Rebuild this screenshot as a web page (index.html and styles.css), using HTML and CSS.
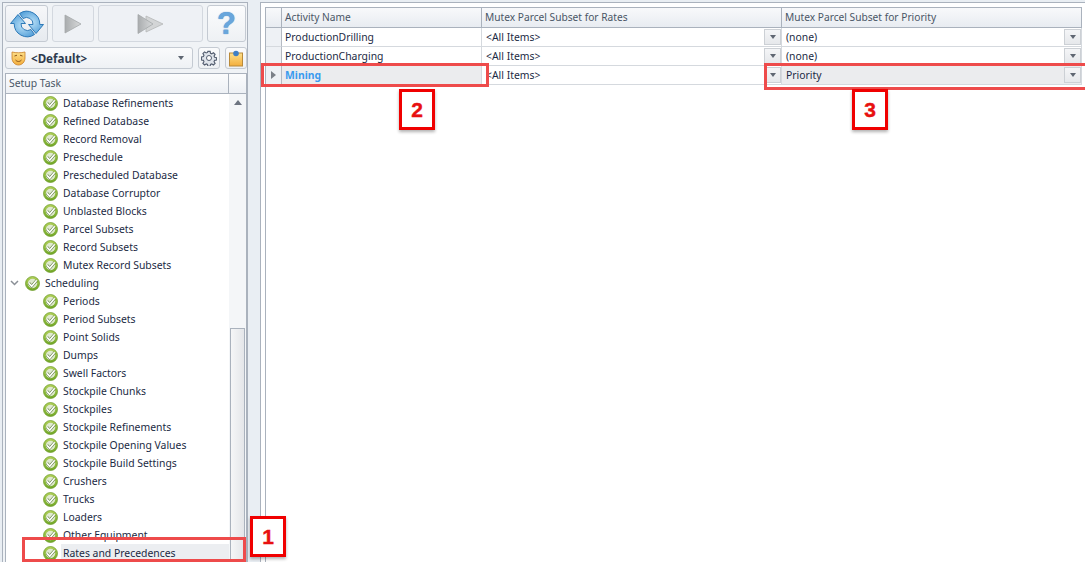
FILE: index.html
```html
<!DOCTYPE html>
<html lang="en">
<head>
<meta charset="utf-8">
<title>Setup Task</title>
<link rel="stylesheet" href="styles.css">
</head>
<body>
<svg class="defs" width="0" height="0" aria-hidden="true">
  <defs>
    <linearGradient id="gb" x1="0" y1="0" x2="0" y2="1">
      <stop offset="0" stop-color="#b4d25c"/>
      <stop offset="1" stop-color="#6fa626"/>
    </linearGradient>
    <radialGradient id="bl" cx="50%" cy="50%" r="65%">
      <stop offset="0" stop-color="#b9e0f7"/>
      <stop offset="1" stop-color="#4b9ad6"/>
    </radialGradient>
    <linearGradient id="gr" x1="0" y1="0" x2="1" y2="0">
      <stop offset="0" stop-color="#a9acae"/>
      <stop offset="1" stop-color="#d8dadb"/>
    </linearGradient>
    <linearGradient id="or" x1="0" y1="0" x2="0" y2="1">
      <stop offset="0" stop-color="#fde08a"/>
      <stop offset="1" stop-color="#f3ae3d"/>
    </linearGradient>
    <symbol id="ok" viewBox="0 0 15 15">
      <circle cx="7.5" cy="7.5" r="7" fill="url(#gb)" stroke="#6a9a24" stroke-width="0.7"/>
      <circle cx="7.5" cy="7.5" r="4.7" fill="#dfe9cf"/>
      <path d="M4 7.300l2.700 2.900L11.700 4.300" fill="none" stroke="#5f7f3c" stroke-width="2.800"/>
      <path d="M4 7.300l2.700 2.900L11.700 4.300" fill="none" stroke="#fff" stroke-width="1.700"/>
    </symbol>
  </defs>
</svg>

<div class="app">
  <aside class="left">
    <div class="toolbar">
      <button class="tool tool-refresh" type="button">
        <svg width="34" height="32" viewBox="0 0 34 32">
          <path id="arc" d="M8 6.500L15.500 15.500H11A6.500 6.500 0 0 0 21 21.500L24.500 26.500A13 13 0 0 1 4.200 15.500H.5Z" fill="url(#bl)" stroke="#2f7ab8" stroke-width="1"/>
          <path d="M8 6.500L15.500 15.500H11A6.500 6.500 0 0 0 21 21.500L24.500 26.500A13 13 0 0 1 4.200 15.500H.5Z" transform="rotate(180 17 16)" fill="url(#bl)" stroke="#2f7ab8" stroke-width="1"/>
        </svg>
      </button>
      <button class="tool tool-play" type="button">
        <svg width="18" height="20" viewBox="0 0 18 20"><path d="M1 1l16 9-16 9z" fill="url(#gr)" stroke="#a5a8aa" stroke-width=".8"/></svg>
      </button>
      <button class="tool tool-ff" type="button">
        <svg width="27" height="22" viewBox="0 0 27 22"><path d="M9 3l17 8-17 8z" fill="#d3d5d6" stroke="#b5b7b8" stroke-width=".8"/><path d="M1 1.500l15 9.500-15 9.500z" fill="url(#gr)" stroke="#a5a8aa" stroke-width=".8"/></svg>
      </button>
      <button class="tool tool-help" type="button"><span class="q">?</span></button>
    </div>

    <div class="selector">
      <div class="combo">
        <svg class="mask" width="15" height="16" viewBox="0 0 15 16">
          <path d="M1 2c4 1 9 1 13 0v6c0 4-3 7-6.500 7S1 12 1 8z" fill="url(#or)" stroke="#c9822a" stroke-width=".8"/>
          <path d="M3.500 6l2.500-.8M9 5.200l2.500.8M4.500 10c2 2 4 2 6 0" fill="none" stroke="#8a5417" stroke-width="1"/>
        </svg>
        <span class="combo-text">&lt;Default&gt;</span>
        <span class="caret caret-combo"></span>
      </div>
      <button class="mini" type="button">
        <svg width="16" height="16" viewBox="0 0 16 16"><path d="M6.800 1h2.400l.4 2 1.300.6 1.800-1.100 1.700 1.700-1.100 1.800.6 1.300 2 .4v2.400l-2 .4-.6 1.300 1.100 1.800-1.700 1.700-1.800-1.100-1.300.6-.4 2H6.800l-.4-2-1.300-.6-1.800 1.100-1.700-1.700 1.100-1.800-.6-1.300-2-.4V6.800l2-.4.6-1.300-1.100-1.800 1.700-1.700 1.800 1.100 1.300-.6z" transform="translate(.4 .4) scale(.95)" fill="#dfe4eb" stroke="#566072" stroke-width="1.200"/><circle cx="8" cy="8" r="2.500" fill="#fff" stroke="#566072"/></svg>
      </button>
      <button class="mini" type="button">
        <svg width="16" height="17" viewBox="0 0 16 17"><rect x="1.500" y="3" width="13" height="13" fill="url(#or)" stroke="#b98a3a"/><circle cx="8" cy="3.500" r="2.800" fill="#3f7fc4"/></svg>
      </button>
    </div>

    <section class="tree">
      <header class="tree-head"><span class="tree-title">Setup Task</span><span class="tree-corner"></span></header>
      <div class="tree-body">
        <ul class="rows">
          <li class="row"><svg class="ok"><use href="#ok"/></svg>Database Refinements</li>
          <li class="row"><svg class="ok"><use href="#ok"/></svg>Refined Database</li>
          <li class="row"><svg class="ok"><use href="#ok"/></svg>Record Removal</li>
          <li class="row"><svg class="ok"><use href="#ok"/></svg>Preschedule</li>
          <li class="row"><svg class="ok"><use href="#ok"/></svg>Prescheduled Database</li>
          <li class="row"><svg class="ok"><use href="#ok"/></svg>Database Corruptor</li>
          <li class="row"><svg class="ok"><use href="#ok"/></svg>Unblasted Blocks</li>
          <li class="row"><svg class="ok"><use href="#ok"/></svg>Parcel Subsets</li>
          <li class="row"><svg class="ok"><use href="#ok"/></svg>Record Subsets</li>
          <li class="row"><svg class="ok"><use href="#ok"/></svg>Mutex Record Subsets</li>
          <li class="row row-group"><svg class="chev" width="9" height="6" viewBox="0 0 9 6"><path d="M1 1l3.500 3.500L8 1" fill="none" stroke="#8a8f96" stroke-width="1.500"/></svg><svg class="ok"><use href="#ok"/></svg>Scheduling</li>
          <li class="row"><svg class="ok"><use href="#ok"/></svg>Periods</li>
          <li class="row"><svg class="ok"><use href="#ok"/></svg>Period Subsets</li>
          <li class="row"><svg class="ok"><use href="#ok"/></svg>Point Solids</li>
          <li class="row"><svg class="ok"><use href="#ok"/></svg>Dumps</li>
          <li class="row"><svg class="ok"><use href="#ok"/></svg>Swell Factors</li>
          <li class="row"><svg class="ok"><use href="#ok"/></svg>Stockpile Chunks</li>
          <li class="row"><svg class="ok"><use href="#ok"/></svg>Stockpiles</li>
          <li class="row"><svg class="ok"><use href="#ok"/></svg>Stockpile Refinements</li>
          <li class="row"><svg class="ok"><use href="#ok"/></svg>Stockpile Opening Values</li>
          <li class="row"><svg class="ok"><use href="#ok"/></svg>Stockpile Build Settings</li>
          <li class="row"><svg class="ok"><use href="#ok"/></svg>Crushers</li>
          <li class="row"><svg class="ok"><use href="#ok"/></svg>Trucks</li>
          <li class="row"><svg class="ok"><use href="#ok"/></svg>Loaders</li>
          <li class="row"><svg class="ok"><use href="#ok"/></svg>Other Equipment</li>
          <li class="row row-selected"><svg class="ok"><use href="#ok"/></svg><span class="row-label">Rates and Precedences</span></li>
        </ul>
        <div class="scrollbar">
          <span class="scroll-up"></span>
          <span class="scroll-thumb"></span>
        </div>
      </div>
    </section>
  </aside>

  <div class="splitter"></div>

  <main class="right">
    <div class="grid">
      <div class="gh gh-ind"></div>
      <div class="gh">Activity Name</div>
      <div class="gh">Mutex Parcel Subset for Rates</div>
      <div class="gh gh-last">Mutex Parcel Subset for Priority</div>

      <div class="gi"></div>
      <div class="gc">ProductionDrilling</div>
      <div class="gc gc-drop">&lt;All Items&gt;<span class="drop"></span></div>
      <div class="gc gc-drop gc-last">(none)<span class="drop"></span></div>

      <div class="gi"></div>
      <div class="gc">ProductionCharging</div>
      <div class="gc gc-drop">&lt;All Items&gt;<span class="drop"></span></div>
      <div class="gc gc-drop gc-last">(none)<span class="drop"></span></div>

      <div class="gi gi-cur"><span class="cur-arrow"></span></div>
      <div class="gc gc-active">Mining</div>
      <div class="gc gc-drop">&lt;All Items&gt;<span class="drop"></span></div>
      <div class="gc gc-drop gc-last gc-grey">Priority<span class="drop"></span></div>
    </div>
  </main>
</div>

<div class="mark mark-1"></div>
<div class="mark mark-2"></div>
<div class="mark mark-3"></div>
<div class="num num-1">1</div>
<div class="num num-2">2</div>
<div class="num num-3">3</div>
</body>
</html>
```

FILE: styles.css
```css
* { box-sizing: border-box; }
html, body { margin: 0; height: 100%; overflow: hidden; }
body {
  background: #e9eef3;
  font-family: "Noto Sans", "DejaVu Sans", sans-serif;
  font-size: 10.4px;
  color: #1b2a44;
  position: relative;
}
.defs { position: absolute; }
.app { display: flex; height: 562px; padding: 2px 0 0 2px; }

.left {
  width: 246px;
  flex: none;
  display: flex;
  flex-direction: column;
  border: 1px solid #aab2bd;
  border-bottom: 0;
  background: #f0f3f6;
  padding: 2px 0 0 2px;
}
.toolbar { display: flex; gap: 4px; height: 37px; flex: none; }
.tool {
  padding: 0;
  display: flex;
  align-items: center;
  justify-content: center;
  border: 1px solid #d3d8df;
  border-radius: 3px;
  background: #eef1f5;
}
.tool-refresh { width: 43px; background: linear-gradient(#f6f7f9, #e6eaef); border-color: #c4cad2; }
.tool-play { width: 42px; }
.tool-ff { width: 105px; }
.tool-help { width: 39px; background: linear-gradient(#fbfcfd, #eef1f4); border-color: #c4cad2; }
.q {
  font: bold 31px/1 "Liberation Sans", sans-serif;
  color: #69a6dc;
  text-shadow: 0 0 1px #3f7fc0;
}
.selector { display: flex; gap: 5px; margin-top: 5px; height: 22px; flex: none; }
.combo {
  width: 189px;
  display: flex;
  align-items: center;
  padding: 0 6px 0 5px;
  background: linear-gradient(#fafbfc, #eef1f4);
  border: 1px solid #c4cad2;
  border-radius: 3px;
}
.mask { margin-right: 5px; }
.combo-text { font-weight: 700; font-size: 11.6px; flex: 1; color: #2d3a4e; }
.caret { width: 0; height: 0; border: 3.500px solid transparent; border-top: 4px solid #5f6672; border-bottom: 0; }
.caret-combo { margin-right: 2px; }
.mini {
  width: 22px;
  padding: 0;
  display: flex;
  align-items: center;
  justify-content: center;
  background: linear-gradient(#fafbfc, #eef1f4);
  border: 1px solid #c4cad2;
  border-radius: 3px;
}

.tree {
  width: 242px;
  margin-top: 4px;
  flex: 1;
  min-height: 0;
  display: flex;
  flex-direction: column;
  border: 1px solid #aab2bd;
  border-bottom: 0;
  background: #fff;
}
.tree-head {
  display: flex;
  height: 20px;
  flex: none;
  background: linear-gradient(#fbfcfd, #edf0f4);
  border-bottom: 1px solid #aab2bd;
  color: #4a5666;
  line-height: 19px;
}
.tree-title { flex: 1; padding-left: 3px; border-right: 1px solid #aab2bd; }
.tree-corner { width: 17px; flex: none; }
.tree-body { flex: 1; min-height: 0; display: flex; overflow: hidden; }
.rows { list-style: none; margin: 0; padding: 0; flex: 1; min-width: 0; }
.row { height: 18px; display: flex; align-items: center; padding-left: 37px; white-space: nowrap; }
.row-group { padding-left: 4px; }
.ok { width: 15px; height: 15px; margin-right: 5px; flex: none; }
.chev { margin-right: 6px; flex: none; }
.row-label { background: #eceef1; flex: 1; height: 18px; line-height: 18px; margin-left: -2px; padding-left: 2px; }

.scrollbar {
  width: 17px;
  flex: none;
  display: flex;
  flex-direction: column;
  align-items: center;
  background: #f4f6f8;
  padding-top: 6px;
}
.scroll-up { width: 0; height: 0; border: 4.500px solid transparent; border-bottom: 5px solid #6d7480; border-top: 0; }
.scroll-thumb { width: 15px; margin-top: 223px; flex: 1; background: linear-gradient(90deg, #f5f6f7, #e4e6e9); border: 1px solid #aab2bd; border-bottom: 0; }

.splitter { width: 12px; flex: none; }

.right {
  flex: 1;
  min-width: 0;
  background: #fff;
  border: 1px solid #aab2bd;
  border-right: 0;
  border-bottom: 0;
  padding: 4px 3px 0 4px;
  display: flex;
}
.grid {
  flex: 1;
  display: grid;
  grid-template-columns: 16px 200px 300px 1fr;
  grid-template-rows: 20px 19px 19px 19px;
  align-content: start;
  border-left: 1px solid #aab2bd;
  border-top: 1px solid #aab2bd;
}
.gh {
  background: linear-gradient(#f8f9fb, #e8ecf1);
  border-right: 1px solid #aab2bd;
  border-bottom: 1px solid #aab2bd;
  padding-left: 3px;
  line-height: 19px;
  font-size: 10.2px;
  color: #4a5666;
}
.gh-ind { padding: 0; }
.gi {
  background: #eef1f5;
  border-right: 1px solid #b4bac3;
  border-bottom: 1px solid #d5d9de;
  display: flex;
  align-items: center;
  justify-content: center;
}
.cur-arrow { width: 0; height: 0; border: 4px solid transparent; border-left: 5px solid #7b8088; border-right: 0; }
.gc {
  border-right: 1px solid #d5d9de;
  border-bottom: 1px solid #d5d9de;
  padding-left: 3px;
  line-height: 18px;
  white-space: nowrap;
}
.gc-drop { display: flex; justify-content: space-between; align-items: stretch; padding-left: 4px; padding-right: 0; }
.gc-active { background: #ebecee; color: #3a9bee; font-weight: 700; }
.gc-grey { background: #ebecee; }
.drop {
  width: 17px;
  margin: 1px 0;
  display: flex;
  align-items: center;
  justify-content: center;
  background: linear-gradient(#f4f5f7, #e6e8eb);
  border: 1px solid #ccd0d5;
}
.drop::after { content: ""; border: 3.500px solid transparent; border-top: 4px solid #5f6672; border-bottom: 0; }

.mark { position: absolute; border: 3px solid #ee4b4b; }
.mark-1 { left: 22px; top: 537px; width: 224px; height: 25px; }
.mark-2 { left: 261px; top: 63px; width: 228px; height: 24px; }
.mark-3 { left: 764px; top: 63px; width: 330px; height: 27px; }

.num {
  position: absolute;
  width: 36px;
  height: 41px;
  background: #fff;
  border: 3px solid #f00000;
  color: #e81010;
  font: bold 21px/35px "Liberation Sans", sans-serif;
  -webkit-text-stroke: .4px #e81010;
  text-align: center;
  box-shadow: 0 2px 3px rgba(0, 0, 0, .3);
}
.num-1 { left: 250px; top: 516px; }
.num-2 { left: 399px; top: 89px; }
.num-3 { left: 852px; top: 89px; }
```
